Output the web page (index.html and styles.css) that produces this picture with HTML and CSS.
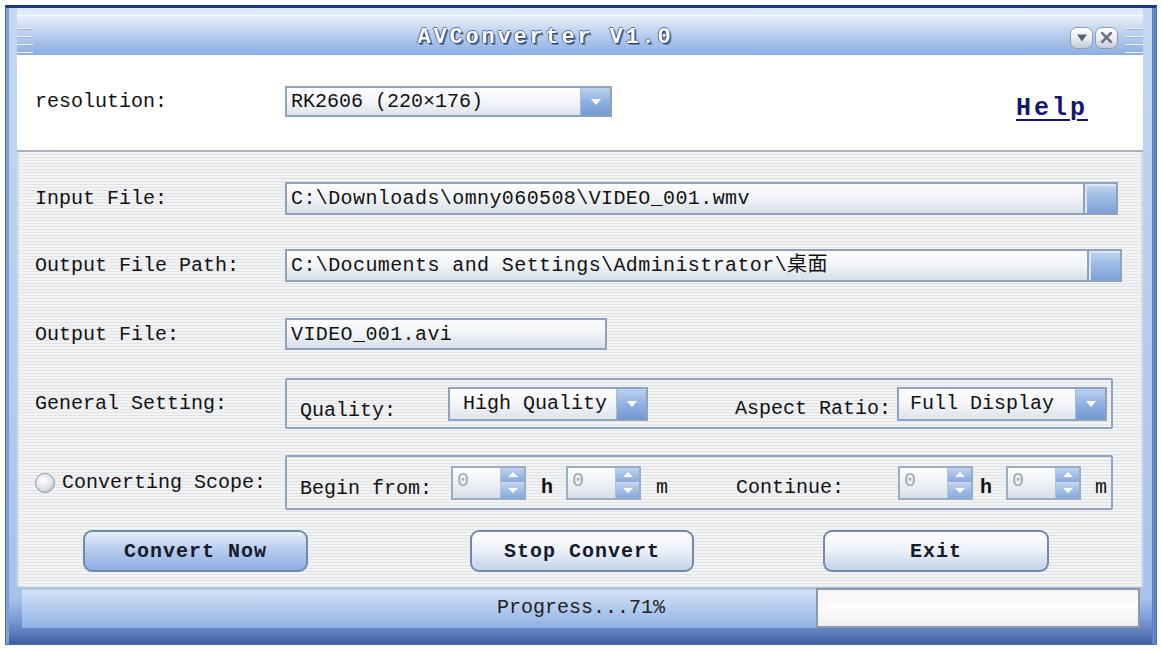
FILE: index.html
```html
<!DOCTYPE html>
<html lang="en">
<head>
    <meta charset="UTF-8">
    <title>AVConverter V1.0</title>
    <link rel="stylesheet" href="styles.css">
</head>
<body>

    <div class="window">
        <div class="titlebar">
            <div class="grip"></div>
            <div class="title">AVConverter V1.0</div>
            <div class="title-buttons">
                <span class="tbtn">
                    <svg width="12" height="10" viewBox="0 0 12 10"><path d="M1 1.5 L11 1.5 L6 8.5 Z" fill="#5b6272"/></svg>
                </span>
                <span class="tbtn">
                    <svg width="13" height="13" viewBox="0 0 12 12"><path d="M2 2 L10 10 M10 2 L2 10" stroke="#6a7080" stroke-width="2.4" stroke-linecap="round"/></svg>
                </span>
            </div>
            <div class="grip grip-right"></div>
        </div>

        <div class="top">
            <span class="label">resolution:</span>
            <div class="combo combo-res">
                <span class="combo-text">RK2606 (220×176)</span>
                <span class="drop"></span>
            </div>
            <a class="help" href="#">Help</a>
        </div>

        <div class="main">
            <div class="row">
                <span class="label">Input File:</span>
                <div class="field field-input">
                    <span class="field-text">C:\Downloads\omny060508\VIDEO_001.wmv</span>
                    <span class="browse"></span>
                </div>
            </div>

            <div class="row row-path">
                <span class="label">Output File Path:</span>
                <div class="field field-path">
                    <span class="field-text">C:\Documents and Settings\Administrator\桌面</span>
                    <span class="browse"></span>
                </div>
            </div>

            <div class="row row-out">
                <span class="label">Output File:</span>
                <div class="field field-out">
                    <span class="field-text">VIDEO_001.avi</span>
                </div>
            </div>

            <div class="row row-general">
                <span class="label">General Setting:</span>
                <div class="group group-general">
                    <span class="quality-label">Quality:</span>
                    <div class="combo combo-quality">
                        <span class="combo-text">High Quality</span>
                        <span class="drop"></span>
                    </div>
                    <span class="aspect-label">Aspect Ratio:</span>
                    <div class="combo combo-aspect">
                        <span class="combo-text">Full Display</span>
                        <span class="drop"></span>
                    </div>
                </div>
            </div>

            <div class="row row-scope">
                <span class="label label-scope"><span class="radio"></span>Converting Scope:</span>
                <div class="group group-scope">
                    <span class="begin-label">Begin from:</span>
                    <div class="spin"><span class="spin-val">0</span><span class="spin-btns"><i class="up"></i><i class="down"></i></span></div>
                    <span class="unit unit-h">h</span>
                    <div class="spin"><span class="spin-val">0</span><span class="spin-btns"><i class="up"></i><i class="down"></i></span></div>
                    <span class="unit unit-m">m</span>
                    <span class="continue-label">Continue:</span>
                    <div class="spin"><span class="spin-val">0</span><span class="spin-btns"><i class="up"></i><i class="down"></i></span></div>
                    <span class="unit unit-h2">h</span>
                    <div class="spin"><span class="spin-val">0</span><span class="spin-btns"><i class="up"></i><i class="down"></i></span></div>
                    <span class="unit unit-m2">m</span>
                </div>
            </div>

            <div class="buttons">
                <button class="btn btn-convert">Convert Now</button>
                <button class="btn btn-stop">Stop Convert</button>
                <button class="btn btn-exit">Exit</button>
            </div>
        </div>

        <div class="status">
            <div class="progress">
                <div class="fill" style="width: 71%;"></div>
                <div class="rest"></div>
                <span class="progress-text">Progress...71%</span>
            </div>
        </div>
    </div>

</body>
</html>
```

FILE: styles.css
```css
* {
    box-sizing: border-box;
}

body {
    margin: 0;
    background: #fff;
    color: #121212;
    font-family: "Liberation Mono", "DejaVu Sans Mono", "Noto Sans CJK SC", monospace;
    font-size: 20px;
}

/* outer frame */
.window {
    width: 1152px;
    height: 640px;
    margin: 5px 0 0 5px;
    display: flex;
    flex-direction: column;
    border: 1px solid #4a6eae;
    border-top: 3px solid #1d3b78;
    padding: 0 13px 16px 11px;
    background: linear-gradient(to bottom, #c6d8f2 0, #a8c2ea 590px, #7a9cd4 612px, #3e60a0 100%);
    box-shadow: inset 3px 0 0 #7c9fd8, inset -4px 0 0 #5f85c6;
}

/* title bar */
.titlebar {
    height: 47px;
    flex: none;
    display: flex;
    align-items: center;
    padding-top: 12px;
    background:
        linear-gradient(to bottom, transparent 7px, rgba(255, 255, 255, 0.8) 7px, rgba(255, 255, 255, 0.8) 8px, transparent 8px),
        linear-gradient(to bottom, #dde7f6 0, #e7eef9 9px, #c4d5f0 22px, #9ebce8 38px, #8badE2 47px);
}

.grip {
    width: 16px;
    height: 32px;
    flex: none;
    background: repeating-linear-gradient(to bottom, transparent 0, transparent 6px, #eef3fb 6px, #eef3fb 7px, #9cb3d6 7px, #9cb3d6 8px);
}

.grip-right {
    width: 18px;
    margin-left: 7px;
}

.title {
    flex: 1;
    text-align: center;
    padding-right: 12px;
    font-size: 22px;
    font-weight: bold;
    letter-spacing: 2.8px;
    color: #fff;
    text-shadow: 1px 1px 0 #233f72, 2px 2px 0 rgba(35, 63, 114, 0.5), -1px 0 0 #4e6ea3, 0 -1px 0 #4e6ea3;
}

.title-buttons {
    display: flex;
    gap: 2px;
}

.tbtn {
    width: 23px;
    height: 22px;
    display: flex;
    align-items: center;
    justify-content: center;
    border: 1px solid #8e9ab0;
    border-radius: 7px;
    background: linear-gradient(to bottom, #ffffff, #e7ebf1 55%, #c3cad6);
}

/* resolution strip */
.top {
    height: 97px;
    flex: none;
    display: flex;
    align-items: flex-start;
    padding: 31px 0 0 18px;
    background: #fff;
    border-bottom: 2px solid #a9b1bb;
}

.top .label {
    height: 31px;
    line-height: 31px;
}

.label {
    width: 250px;
    flex: none;
    white-space: nowrap;
}

.help {
    margin: 8px 55px 0 auto;
    font-size: 25px;
    font-weight: bold;
    letter-spacing: 3px;
    color: #16166e;
    text-decoration: underline;
    text-decoration-thickness: 2px;
    text-underline-offset: 4px;
}

/* combo boxes */
.combo {
    display: flex;
    height: 31px;
    border: 2px solid #8fa3bd;
    background: linear-gradient(to bottom, #ffffff, #f3f5f9 50%, #dde3eb);
}

.combo-text {
    flex: 1;
    line-height: 27px;
    padding-left: 4px;
    white-space: nowrap;
    overflow: hidden;
}

.drop {
    width: 30px;
    flex: none;
    display: flex;
    align-items: center;
    justify-content: center;
    border-left: 1px solid #a9bbd3;
    background: linear-gradient(to bottom, #bcd0ee, #8cafe0 55%, #7399d2);
}

.drop::after {
    content: "";
    border-left: 5px solid transparent;
    border-right: 5px solid transparent;
    border-top: 6px solid #fff;
}

.combo-res {
    width: 327px;
}

/* striped body */
.main {
    flex: 1;
    padding: 30px 0 0 16px;
    border-left: 2px solid #d6dde7;
    border-right: 2px solid #d6dde7;
    background: repeating-linear-gradient(to bottom, #f2f3f5 0, #f2f3f5 2px, #e1e3e7 2px, #e1e3e7 3px);
}

.row {
    display: flex;
    align-items: center;
}

.row-path {
    margin-top: 34px;
}

.row-out {
    margin-top: 36px;
}

.row-general {
    margin-top: 28px;
}

.row-scope {
    margin-top: 26px;
}

.field {
    display: flex;
    height: 33px;
    border: 2px solid #8fa2ba;
    background: linear-gradient(to bottom, #fdfdfe, #f0f3f7 50%, #d8dfe8);
}

.field-text {
    flex: 1;
    line-height: 29px;
    padding-left: 4px;
    letter-spacing: 0.4px;
    white-space: nowrap;
    overflow: hidden;
}

.browse {
    width: 33px;
    flex: none;
    border-left: 2px solid #8fa2ba;
    background: linear-gradient(to bottom, #c4d6f0, #9ab9e5 50%, #7fa3d8);
    box-shadow: inset 2px 2px 0 #d9e4f5;
}

.field-input {
    width: 833px;
}

.field-path {
    width: 837px;
}

.field-out {
    width: 322px;
    height: 32px;
}

/* group boxes */
.group {
    display: flex;
    align-items: center;
    width: 828px;
    padding-left: 13px;
    border: 2px solid #90a4c0;
    border-radius: 2px;
}

.group-general {
    height: 51px;
}

.quality-label {
    width: 148px;
    padding-top: 14px;
}

.combo-quality {
    width: 200px;
    height: 34px;
}

.combo-quality .combo-text {
    line-height: 30px;
    padding-left: 13px;
}

.aspect-label {
    width: 162px;
    margin-left: 87px;
    padding-top: 10px;
}

.combo-aspect {
    width: 210px;
    height: 34px;
}

.combo-aspect .combo-text {
    line-height: 30px;
    padding-left: 11px;
}

.group-scope {
    height: 55px;
}

.label-scope {
    display: flex;
    align-items: center;
    gap: 7px;
}

.radio {
    width: 20px;
    height: 20px;
    border-radius: 50%;
    border: 1px solid #8d949e;
    background: radial-gradient(circle at 40% 35%, #ffffff, #dde1e7 55%, #a7aeb8);
}

.begin-label {
    width: 151px;
    padding-top: 12px;
}

.continue-label {
    width: 162px;
    margin-left: 68px;
    padding-top: 10px;
}

.spin {
    display: flex;
    width: 75px;
    height: 34px;
    border: 2px solid #9badc4;
    background: linear-gradient(to bottom, #fdfdfe, #eef1f5 50%, #d9dee6);
}

.spin-val {
    flex: 1;
    padding-left: 4px;
    line-height: 26px;
    color: #a3a6ab;
}

.spin-btns {
    width: 24px;
    display: flex;
    flex-direction: column;
    border-left: 1px solid #b2c2d8;
}

.spin-btns i {
    flex: 1;
    display: flex;
    align-items: center;
    justify-content: center;
    background: linear-gradient(to bottom, #bfd2ee, #86aadd);
}

.spin-btns i + i {
    border-top: 1px solid #d2deef;
}

.spin-btns .up::after {
    content: "";
    border-left: 5px solid transparent;
    border-right: 5px solid transparent;
    border-bottom: 5px solid #fff;
}

.spin-btns .down::after {
    content: "";
    border-left: 5px solid transparent;
    border-right: 5px solid transparent;
    border-top: 5px solid #fff;
}

.unit {
    padding-top: 10px;
}

.unit-h {
    font-weight: bold;
    margin: 0 13px 0 15px;
}

.unit-m {
    margin-left: 15px;
}

.unit-h2 {
    font-weight: bold;
    margin: 0 14px 0 7px;
}

.unit-m2 {
    margin-left: 14px;
}

/* action buttons */
.buttons {
    display: flex;
    margin-top: 20px;
    padding-left: 48px;
}

.btn {
    height: 42px;
    width: 225px;
    border: 2px solid #7389a8;
    border-radius: 9px;
    font-family: inherit;
    font-size: 20px;
    font-weight: bold;
    letter-spacing: 1px;
    color: #141a2c;
    background: linear-gradient(to bottom, #ffffff, #eef3fa 45%, #c3d3ea);
    cursor: pointer;
}

.btn-convert {
    background: linear-gradient(to bottom, #e6eefa, #b9cdee 45%, #8cafe2);
}

.btn-stop {
    width: 224px;
    margin-left: 162px;
}

.btn-exit {
    width: 226px;
    margin-left: 129px;
}

/* progress bar */
.status {
    height: 40px;
    flex: none;
    margin: 1px 3px 0 5px;
}

.progress {
    position: relative;
    display: flex;
    height: 100%;
}

.fill {
    background: linear-gradient(to bottom, #d4e2f6, #b2caee 50%, #8fb1e4);
    border-top: 2px solid #b8cbe6;
}

.rest {
    flex: 1;
    border: 2px solid #8f99a6;
    background: linear-gradient(to bottom, #f4f5f7, #fdfdfd 50%, #eceef1);
}

.progress-text {
    position: absolute;
    left: 0;
    right: 0;
    top: 0;
    line-height: 40px;
    text-align: center;
    color: #222;
}
```
